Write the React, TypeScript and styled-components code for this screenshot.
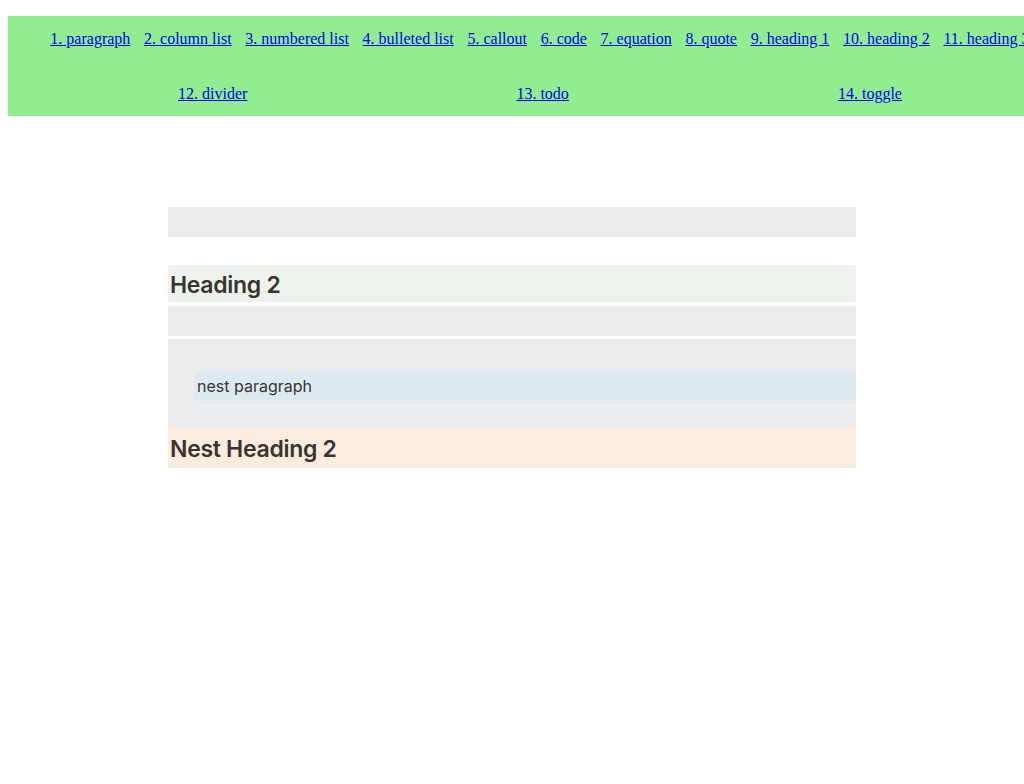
import React from "react";
import styled, { createGlobalStyle } from "styled-components";

const GlobalStyle = createGlobalStyle`
  body {
    margin: 8px 0 8px 8px;
    background: #ffffff;
    font-family: "Liberation Serif", "Times New Roman", serif;
  }
`;

const Nav = styled.nav`
  margin-top: 8px;
  overflow: hidden;
  box-sizing: border-box;
  padding: 14px 0 13px 35.5px;
  background: #90ee90;
  display: flex;
  flex-direction: column;
  gap: 37px;
`;

const LinkRow = styled.ul`
  list-style: none;
  margin: 0;
  padding: 0;
  width: 993px;
  flex: none;
  display: flex;
  justify-content: space-around;
  font-size: 16px;
  line-height: 18px;
`;

const LinkItem = styled.li`
  white-space: nowrap;
`;

const Link = styled.a`
  color: #0000ee;
  text-decoration: underline;
`;

const Page = styled.main`
  width: 688px;
  margin: 91px 0 0 160px;
  display: flex;
  flex-direction: column;
  font-family: Inter, "Noto Sans", sans-serif;
  color: #37352f;
`;

const Block = styled.div<{ $bg: string; $mt?: number; $h: number; $pt?: number }>`
  background: ${(p) => p.$bg};
  margin-top: ${(p) => p.$mt ?? 0}px;
  height: ${(p) => p.$h}px;
  padding-top: ${(p) => p.$pt ?? 0}px;
  line-height: ${(p) => p.$h - (p.$pt ?? 0)}px;
  padding-left: 2px;
  box-sizing: border-box;
`;

const Heading = styled(Block).attrs({ as: "h2" })`
  margin-bottom: 0;
  font-size: 23px;
  font-weight: 600;
  letter-spacing: -0.3px;
`;

const Paragraph = styled(Block)`
  font-size: 16px;
`;

const Toggle = styled.div`
  margin-top: 3px;
  background: #ebeced;
  padding: 32px 0 2px;
  display: flex;
  flex-direction: column;
`;

const Nested = styled.div`
  margin-left: 27px;
  margin-bottom: 27px;
`;

const row1 = [
  "1. paragraph",
  "2. column list",
  "3. numbered list",
  "4. bulleted list",
  "5. callout",
  "6. code",
  "7. equation",
  "8. quote",
  "9. heading 1",
  "10. heading 2",
  "11. heading 3",
];
const row2 = ["12. divider", "13. todo", "14. toggle"];

export default function App() {
  return (
    <>
      <GlobalStyle />
      <Nav>
        <LinkRow>
          {row1.map((t) => (
            <LinkItem key={t}>
              <Link href="#">{t}</Link>
            </LinkItem>
          ))}
        </LinkRow>
        <LinkRow>
          {row2.map((t) => (
            <LinkItem key={t}>
              <Link href="#">{t}</Link>
            </LinkItem>
          ))}
        </LinkRow>
      </Nav>
      <Page>
        <Block $bg="#ebeced" $h={30} />
        <Heading $bg="#edf3ec" $mt={28} $h={37} $pt={3}>
          Heading 2
        </Heading>
        <Block $bg="#ebeced" $mt={4} $h={30} />
        <Toggle>
          <Nested>
            <Paragraph $bg="#ddebf1" $h={30}>
              nest paragraph
            </Paragraph>
          </Nested>
          <Heading $bg="#fbecdd" $h={38} $pt={4}>
            Nest Heading 2
          </Heading>
        </Toggle>
      </Page>
    </>
  );
}
